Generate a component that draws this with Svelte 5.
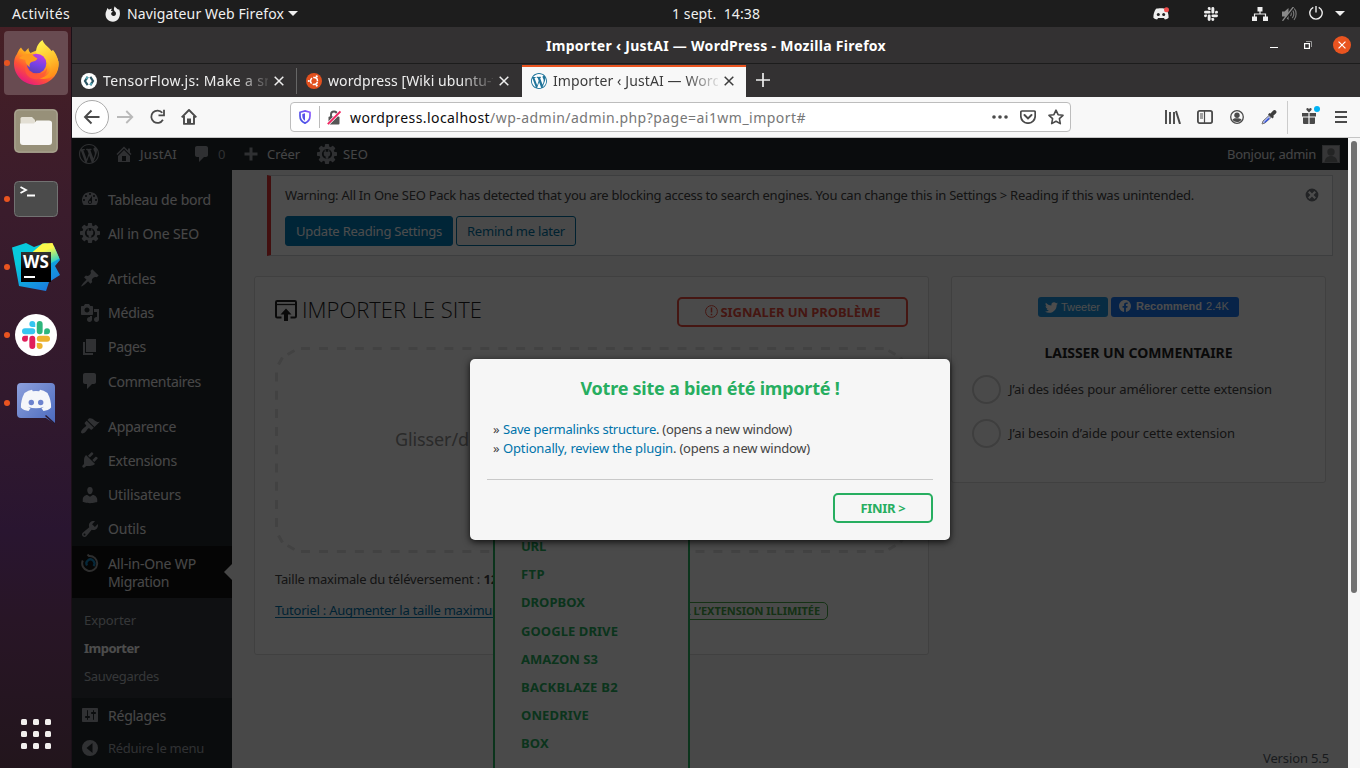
<script>
  // Stretches or tightens a label so that it takes exactly the given width.
  function fit(node, width) {
    if (!width) return;
    const natural = node.getBoundingClientRect().width;
    node.style.letterSpacing = (width - natural) / node.textContent.length + 'px';
  }

  const icons = {
    dashboard: 'M3.76 16h12.48c1.1-1.37 1.76-3.11 1.76-5 0-4.42-3.58-8-8-8s-8 3.58-8 8c0 1.89.66 3.63 1.76 5zM10 4c.55 0 1 .45 1 1s-.45 1-1 1-1-.45-1-1 .45-1 1-1zM6 6c.55 0 1 .45 1 1s-.45 1-1 1-1-.45-1-1 .45-1 1-1zm8 0c.55 0 1 .45 1 1s-.45 1-1 1-1-.45-1-1 .45-1 1-1zm-5.37 5.55L12 7v6c0 1.1-.9 2-2 2s-2-.9-2-2c0-.57.24-1.08.63-1.45zM4 10c.55 0 1 .45 1 1s-.45 1-1 1-1-.45-1-1 .45-1 1-1zm12 0c.55 0 1 .45 1 1s-.45 1-1 1-1-.45-1-1 .45-1 1-1zm-5 3c0-.55-.45-1-1-1s-1 .45-1 1 .45 1 1 1 1-.45 1-1z',
    post: 'M10.44 3.02l1.82-1.82 6.36 6.35-1.83 1.82c-1.05-.68-2.48-.57-3.41.36l-.75.75c-.92.93-1.04 2.35-.35 3.41l-1.83 1.82-2.41-2.41-2.8 2.79c-.42.42-3.38 2.71-3.8 2.29s1.86-3.39 2.28-3.81l2.79-2.79L4.1 9.36l1.83-1.82c1.05.69 2.48.57 3.4-.36l.75-.75c.93-.92 1.05-2.35.36-3.41z',
    media: 'M13 11V4c0-.55-.45-1-1-1h-1.67L9 1H5L3.67 3H2c-.55 0-1 .45-1 1v7c0 .55.45 1 1 1h10c.55 0 1-.45 1-1zM7 4.5c1.38 0 2.5 1.12 2.5 2.5S8.38 9.5 7 9.5 4.5 8.38 4.5 7 5.62 4.5 7 4.5zM14 6h5v10.5c0 1.38-1.12 2.5-2.5 2.5S14 17.88 14 16.5s1.12-2.5 2.5-2.5c.17 0 .34.02.5.05V9h-3V6zm-4 8.05V13h2v3.5c0 1.38-1.12 2.5-2.5 2.5S7 17.88 7 16.5 8.12 14 9.5 14c.17 0 .34.02.5.05z',
    page: 'M6 15V2h10v13H6zm-1 1h8v2H3V5h2v11z',
    comment: 'M5 2h9c1.1 0 2 .9 2 2v7c0 1.1-.9 2-2 2h-2l-5 5v-5H5c-1.1 0-2-.9-2-2V4c0-1.1.9-2 2-2z',
    appearance: 'M14.48 11.06L7.41 3.99l1.5-1.5c.5-.56 2.3-.47 3.51.32 1.21.8 1.43 1.28 2.91 2.1 1.18.64 2.45 1.26 4.45.85zm-.71.71L6.7 4.7 4.93 6.47c-.39.39-.39 1.02 0 1.41l1.06 1.06c.39.39.39 1.03 0 1.42-.6.6-1.43 1.11-2.21 1.69-.35.26-.7.53-1.01.84C1.43 14.23.4 16.08 1.4 17.07c.99 1 2.84-.03 4.18-1.36.31-.31.58-.66.85-1.02.57-.78 1.08-1.61 1.69-2.21.39-.39 1.02-.39 1.41 0l1.06 1.06c.39.39 1.02.39 1.41 0z',
    plugins: 'M13.11 4.36L9.87 7.6 8 5.73l3.24-3.24c.35-.34 1.05-.2 1.56.32.52.51.66 1.21.31 1.55zm-8 1.77l.91-1.12 9.01 9.01-1.19.84c-.71.71-2.63 1.16-3.82 1.16H6.14L4.9 17.26c-.59.59-1.54.59-2.12 0-.59-.58-.59-1.53 0-2.12l1.24-1.24v-3.88c0-1.13.4-3.19 1.09-3.89zm7.26 3.97l3.24-3.24c.34-.35 1.04-.21 1.55.31.52.51.66 1.21.31 1.55l-3.24 3.25z',
    users: 'M10 9.25c-2.27 0-2.73-3.44-2.73-3.44C7 4.02 7.82 2 9.97 2c2.16 0 2.98 2.02 2.71 3.81 0 0-.41 3.44-2.68 3.44zm0 2.57L12.72 10c2.39 0 4.52 2.33 4.52 4.53v2.49s-3.65 1.13-7.24 1.13c-3.65 0-7.24-1.13-7.24-1.13v-2.49c0-2.25 1.94-4.48 4.47-4.48z',
    tools: 'M16.68 9.77c-1.34 1.34-3.3 1.67-4.95.99l-5.41 6.52c-.99.99-2.59.99-3.58 0s-.99-2.59 0-3.57l6.52-5.42c-.68-1.65-.35-3.61.99-4.95 1.28-1.28 3.12-1.62 4.72-1.06l-2.89 2.89 2.82 2.82 2.86-2.87c.53 1.58.18 3.39-1.08 4.65zM3.81 16.21c.4.39 1.04.39 1.43 0 .4-.4.4-1.04 0-1.43-.39-.4-1.03-.4-1.43 0-.39.39-.39 1.03 0 1.43z',
    settings: 'M18 16V4c0-.55-.45-1-1-1H3c-.55 0-1 .45-1 1v12c0 .55.45 1 1 1h14c.55 0 1-.45 1-1zM8 11h1c.55 0 1 .45 1 1s-.45 1-1 1H8v1.5c0 .28-.22.5-.5.5s-.5-.22-.5-.5V13H6c-.55 0-1-.45-1-1s.45-1 1-1h1V5.5c0-.28.22-.5.5-.5s.5.22.5.5V11zm5-2h-1c-.55 0-1-.45-1-1s.45-1 1-1h1V5.5c0-.28.22-.5.5-.5s.5.22.5.5V7h1c.55 0 1 .45 1 1s-.45 1-1 1h-1v5.5c0 .28-.22.5-.5.5s-.5-.22-.5-.5V9z',
    home: 'M16 8.5l1.53 1.53-1.06 1.06L10 4.6l-6.47 6.49-1.06-1.06L10 2.5l4 4v-2h2v4zm-6-2.46l6 5.99V18H4v-5.97zM12 17v-5H8v5h4z',
    wordpress: 'M20 10c0-5.51-4.49-10-10-10C4.48 0 0 4.49 0 10c0 5.52 4.48 10 10 10 5.51 0 10-4.48 10-10zM7.78 15.37L4.37 6.22c.55-.02 1.17-.08 1.17-.08.5-.06.44-1.13-.06-1.11 0 0-1.45.11-2.37.11-.18 0-.37 0-.58-.01C4.12 2.69 6.87 1.11 10 1.11c2.33 0 4.45.87 6.05 2.34-.68-.11-1.65.39-1.65 1.58 0 .74.45 1.36.9 2.1.35.61.55 1.36.55 2.46 0 1.49-1.4 5-1.4 5l-3.03-8.37c.54-.02.82-.17.82-.17.5-.05.44-1.25-.06-1.22 0 0-1.44.12-2.38.12-.87 0-2.33-.12-2.33-.12-.5-.03-.56 1.2-.06 1.22l.92.08 1.26 3.41zM17.41 10c.24-.64.74-1.87.43-4.25.7 1.29 1.05 2.71 1.05 4.25 0 3.29-1.73 6.24-4.4 7.78.97-2.59 1.94-5.2 2.92-7.78zM6.1 18.09C3.12 16.65 1.11 13.53 1.11 10c0-1.3.23-2.48.72-3.59C3.25 10.3 4.67 14.2 6.1 18.09zm4.03-6.63l2.58 6.98c-.86.29-1.76.45-2.71.45-.79 0-1.57-.11-2.29-.33.81-2.38 1.62-4.74 2.42-7.1z',
    plus: 'M8.5 3.5h3v5h5v3h-5v5h-3v-5h-5v-3h5z',
    collapse: 'M10 2a8 8 0 1 0 0 16 8 8 0 0 0 0-16zM12.500 5v10L6.500 10z',
    dismiss: 'M10 2a8 8 0 1 0 0 16 8 8 0 0 0 0-16zm5 11-2 2-3-3-3 3-2-2 3-3-3-3 2-2 3 3 3-3 2 2-3 3z'
  };

  const slack = [
    ['#e01e5a', 'M5.042 15.165a2.528 2.528 0 0 1-2.52 2.523A2.528 2.528 0 0 1 0 15.165a2.527 2.527 0 0 1 2.522-2.52h2.52v2.52zM6.313 15.165a2.527 2.527 0 0 1 2.521-2.52 2.527 2.527 0 0 1 2.521 2.52v6.313A2.528 2.528 0 0 1 8.834 24a2.528 2.528 0 0 1-2.521-2.522v-6.313z'],
    ['#36c5f0', 'M8.834 5.042a2.528 2.528 0 0 1-2.521-2.52A2.528 2.528 0 0 1 8.834 0a2.528 2.528 0 0 1 2.521 2.522v2.52H8.834zM8.834 6.313a2.528 2.528 0 0 1 2.521 2.521 2.528 2.528 0 0 1-2.521 2.521H2.522A2.528 2.528 0 0 1 0 8.834a2.528 2.528 0 0 1 2.522-2.521h6.312z'],
    ['#2eb67d', 'M18.956 8.834a2.528 2.528 0 0 1 2.522-2.521A2.528 2.528 0 0 1 24 8.834a2.528 2.528 0 0 1-2.522 2.521h-2.522V8.834zM17.688 8.834a2.528 2.528 0 0 1-2.523 2.521 2.527 2.527 0 0 1-2.52-2.521V2.522A2.527 2.527 0 0 1 15.165 0a2.528 2.528 0 0 1 2.523 2.522v6.312z'],
    ['#ecb22e', 'M15.165 18.956a2.528 2.528 0 0 1 2.523 2.522A2.528 2.528 0 0 1 15.165 24a2.527 2.527 0 0 1-2.52-2.522v-2.522h2.52zM15.165 17.688a2.527 2.527 0 0 1-2.52-2.523 2.526 2.526 0 0 1 2.52-2.52h6.313A2.527 2.527 0 0 1 24 15.165a2.528 2.528 0 0 1-2.522 2.523h-6.313z']
  ];

  const menuGroups = [
    [['dashboard', 'Tableau de bord', 103], ['gear', 'All in One SEO', 91]],
    [['post', 'Articles', 48], ['media', 'Médias', 46], ['page', 'Pages', 38], ['comment', 'Commentaires', 93]],
    [['appearance', 'Apparence', 68], ['plugins', 'Extensions', 69], ['users', 'Utilisateurs', 73], ['tools', 'Outils', 38]]
  ];

  const sources = [
    ['URL', 25], ['FTP', 24], ['DROPBOX', 64], ['GOOGLE DRIVE', 97],
    ['AMAZON S3', 77], ['BACKBLAZE B2', 97], ['ONEDRIVE', 68], ['BOX', 28]
  ];

  const teeth = [0, 45, 90, 135, 180, 225, 270, 315];
</script>

{#snippet t(text, width)}<span class="t" use:fit={width}>{text}</span>{/snippet}

{#snippet icon(name, size = 20)}
  {#if name === 'gear'}
    <svg width={size} height={size} viewBox="0 0 20 20" fill="currentColor">
      {#each teeth as a}<rect x="7.9" y="0" width="4.2" height="4" rx=".8" transform="rotate({a} 10 10)" />{/each}
      <circle cx="10" cy="10" r="6.4" fill="none" stroke="currentColor" stroke-width="2.6" />
      <path d="M7.7 5.6h1v2.2h2.6V5.6h1v2.2h.9v2.5c0 1.2-.8 2-1.9 2.3v2.2H8.700v-2.200c-1.100-.3-1.900-1.100-1.900-2.300V7.800h.9z" />
    </svg>
  {:else}
    <svg width={size} height={size} viewBox="0 0 20 20" fill="currentColor" fill-rule="evenodd"><path d={icons[name]} /></svg>
  {/if}
{/snippet}

{#snippet cross(size = 10)}
  <svg width={size} height={size} viewBox="0 0 10 10" fill="none" stroke="currentColor" stroke-width="1.5"><path d="M.7.7l8.600 8.600M9.300.7.7 9.300" /></svg>
{/snippet}

<div class="desktop">
  <header class="topbar">
    <div class="activities">{@render t('Activités', 58)}</div>
    <div class="appmenu">
      <svg width="16" height="16" viewBox="0 0 16 16" fill="#eee"><path fill-rule="evenodd" d="M2.500 2 4 3.800C5 3 6 2.700 7 2.900 6.300 3.400 5.800 4 6 4.700c.6.5 1.400.2 1.800.9-.2.600-1.200.7-1.500 1.400-.5 1.700.8 3.100 2.400 3 2.400-.2 2.900-2.800 1.500-4.200C8.800 4.600 8.300 2.500 9.800.2c.5 1.500 2.400 2.300 3.600 3.500l.6-.7c2.600 5.800-.2 12.700-6 12.700C1.200 15.700-.8 9 1.300 5z" /></svg>
      {@render t('Navigateur Web Firefox', 157)}
      <i class="caret"></i>
    </div>
    <div class="clock">{@render t('1 sept.  14:38', 88)}</div>
    <div class="tray">
      <svg class="tr-discord" width="16" height="14" viewBox="0 0 16 14"><path fill="#eee" d="M3 1.800c2-.8 8-.8 10 0 1.800 2.500 2.700 5.500 2.600 9-1.200 1-2.300 1.500-3.700 1.700l-1-1.500H5.100l-1 1.500C2.700 12.300 1.600 11.800.4 10.800.3 7.300 1.200 4.300 3 1.800z" /><circle cx="5.300" cy="7.600" r="1.500" fill="#222" /><circle cx="10.700" cy="7.600" r="1.500" fill="#222" /><circle cx="13.500" cy="2.700" r="2.500" fill="#ef4b4b" /></svg>
      <svg class="tr-slack" width="14" height="14" viewBox="0 0 24 24" fill="#eee">{#each slack as s}<path d={s[1]} />{/each}</svg>
      <svg class="tr-net" width="16" height="14" viewBox="0 0 16 14" fill="#eee"><path d="M5.500 0h5v4.500h-5zM0 9.500h5V14H0zM11 9.500h5V14h-5z" /><path d="M8 4v3M2.500 10V7h11v3" fill="none" stroke="#eee" stroke-width="1.200" /></svg>
      <svg class="tr-vol" width="16" height="14" viewBox="0 0 16 14" fill="#8a8a8a"><path d="M1 4.500h2.500L7.500 1v12l-4-3.500H1z" /><path d="M9.500 5c1 1 1 3 0 4M11.300 3c2 2 2 6 0 8M13 1.200c2.800 3 2.800 8.500 0 11.600" fill="none" stroke="#777" stroke-width="1.200" /><path d="M2.500 14.500 13.500 0" stroke="#1d1d1d" stroke-width="1.500" /><path d="M1.500 13.800 12.500-.2" stroke="#8a8a8a" stroke-width="1.300" /></svg>
      <svg class="tr-power" width="14" height="14" viewBox="0 0 14 14" fill="none" stroke="#eee" stroke-width="1.400"><path d="M4.300 1.300a6.200 6.200 0 1 0 5.400 0M7 0v6.500" /></svg>
      <i class="caret"></i>
    </div>
  </header>

  <div class="body">
    <nav class="dock">
      <div class="slot on focused"><svg width="48" height="48" viewBox="0 0 48 48">
        <defs>
          <linearGradient id="fx" x1=".8" y1=".1" x2=".2" y2=".95"><stop offset="0" stop-color="#fff44f" /><stop offset=".35" stop-color="#ffa61e" /><stop offset=".65" stop-color="#ff5136" /><stop offset="1" stop-color="#e31587" /></linearGradient>
          <linearGradient id="fy" x1=".3" y1="0" x2=".6" y2="1"><stop offset="0" stop-color="#fff44f" /><stop offset=".55" stop-color="#ffc02c" /><stop offset="1" stop-color="#ff8a16" /></linearGradient>
          <linearGradient id="fz" x1=".6" y1="0" x2=".3" y2="1"><stop offset="0" stop-color="#c43de0" /><stop offset=".55" stop-color="#7542e5" /><stop offset="1" stop-color="#5b3fb0" /></linearGradient>
        </defs>
        <path fill="url(#fx)" d="M9 8.500c1 2 2.500 3.300 4 4.300L16.500 9c0 2.500.8 3.800 2 5L30 9c4 0 14 3 16.500 13.500C48 36 37 46 25 46 11 46 2 36 2 24.500c0-4 1-7 3-9.500.5-1 1.500-4.500 4-6.500z" />
        <path fill="url(#fy)" d="M30.500 1c1.500 5 7 7.500 9 11l1.500-1c5 6 7 14 4 21-4 8-13 9-18 7 8 0 14-7 11-15-2-5-9-6-13.500-8.500C23 10 26 4 30.500 1z" />
        <circle cx="24.500" cy="24.500" r="9.800" fill="url(#fz)" />
        <path fill="#ff9a1f" d="M7 19c5-4 9-5 13-4 2 3 4 3.500 5.500 4.500-1 2.500-4 3-6 3.500-2 1-2.500 3-1.500 5-3-1-5-5-4.500-7-2-.5-4.500-1-6.500-2z" />
        <path fill="#ff5a35" opacity=".75" d="M14 24c0 9 8 13 14 11 4-1 6-4 7-6 0 8-7 12-13 11-7-1-11-8-8-16z" />
      </svg></div>
      <div class="slot"><svg width="46" height="46" viewBox="0 0 46 46"><rect x="1" y="1" width="44" height="44" rx="5" fill="#938b78" /><rect x="2" y="2" width="42" height="42" rx="4" fill="#979079" stroke="#aaa492" /><path d="M7.500 12V10.500q0-1.500 1.500-1.500h10l3 3v4H7.500z" fill="#e3dfd4" /><path d="M7 15.500h14l2.500-3H36q3 0 3 2.500v19q0 3-3 3H10q-3 0-3-3z" fill="#f8f7f5" /></svg></div>
      <div class="slot on"><svg width="46" height="38" viewBox="0 0 46 38"><rect x="1.500" y="1.500" width="43" height="35" rx="4" fill="#4b4b4b" stroke="#727272" /><path d="M7.500 7l5.500 3-5.500 3M14 15.500h8" fill="none" stroke="#fff" stroke-width="1.800" /></svg></div>
      <div class="slot on ws">
        <svg width="48" height="48" viewBox="0 0 48 48"><defs><linearGradient id="wa" x1="0" y1="0" x2=".7" y2="1"><stop offset=".35" stop-color="#07c9dc" /><stop offset="1" stop-color="#1b7be0" /></linearGradient><linearGradient id="wk" x1="0" y1="0" x2="0" y2="1"><stop offset="0" stop-color="#333" /><stop offset=".6" stop-color="#000" /></linearGradient><linearGradient id="wy" x1=".4" y1="0" x2=".9" y2="1"><stop offset=".3" stop-color="#fcf84a" /><stop offset="1" stop-color="#07c9dc" /></linearGradient></defs><path fill="url(#wa)" d="M0 4.500 14 0l8 4 11-4 9 3 6 14-5 6 5 9-11 7-3 9-27-5z" /><path fill="url(#wy)" d="m20 9.500 10.500-9 10-.500 7 15.500-9 5V9.500z" /><rect x="9" y="9" width="30" height="30" fill="url(#wk)" /><path fill="#fff" d="M12 33h11v2H12z" /></svg>
        <b>{@render t('WS', 26)}</b>
      </div>
      <div class="slot on"><svg width="42" height="42" viewBox="0 0 42 42"><circle cx="21" cy="21" r="21" fill="#fff" /><g transform="translate(7 7) scale(1.167)">{#each slack as s}<path fill={s[0]} d={s[1]} />{/each}</g></svg></div>
      <div class="slot on"><svg width="38" height="42" viewBox="0 0 38 42"><defs><linearGradient id="dc" x1="0" y1="0" x2="1" y2="1"><stop offset="0" stop-color="#8da0dc" /><stop offset="1" stop-color="#4a69bd" /></linearGradient></defs><path fill="url(#dc)" d="M4 1h30q4 0 4 4v37l-9-6H4q-4 0-4-4V5q0-4 4-4z" /><path fill="#f5f6fa" d="M7.500 11q4-3 7.500-3.300l.8 1.500q3.200-.5 6.400 0l.8-1.500q3.500.3 7.500 3.300 3.800 7 3.600 14.500-3 3.200-7.600 3.400l-2-2.600 2.500-1.600q-8 3-16 0l2.500 1.600-2 2.600q-4.600-.2-7.600-3.400Q3.700 18 7.500 11z" /><circle cx="14.300" cy="20.500" r="2.700" fill="#6c82ce" /><circle cx="23.700" cy="20.500" r="2.700" fill="#6c82ce" /><path d="M28.500 33.500 38 42" stroke="#29172b" stroke-width="1.500" /></svg></div>
      <div class="apps">{#each teeth as a}<i></i>{/each}<i></i></div>
    </nav>

    <section class="window">
      <div class="titlebar">
        <b>{@render t('Importer ‹ JustAI — WordPress - Mozilla Firefox', 340)}</b>
        <div class="winctl">
          <i class="min"></i>
          <svg width="8" height="8" viewBox="0 0 8 8" fill="none"><path d="M2 .5h5.500V6" stroke="#999" /><rect x=".6" y="2.600" width="4.800" height="4.800" stroke="#fff" stroke-width="1.200" /></svg>
          <i class="close">{@render cross(8)}</i>
        </div>
      </div>

      <div class="tabs">
        <div class="tab first">
          <svg width="16" height="16" viewBox="0 0 16 16"><circle cx="8" cy="8" r="8" fill="#fff" /><path d="M6.700 3.800 4 8l2.700 4.200M9.300 3.800 12 8l-2.700 4.200" fill="none" stroke="#2c5563" stroke-width="2.200" /><path d="M6.700 3.800 5.300 6M9.300 12.200 10.700 10" stroke="#55a6b5" stroke-width="2.200" /></svg>
          <div class="label">{@render t('TensorFlow.js: Make a smile', 191)}</div>{@render cross()}
        </div>
        <div class="tab second">
          <svg width="16" height="16" viewBox="0 0 16 16"><circle cx="8" cy="8" r="8" fill="#e2501e" /><circle cx="8" cy="8" r="3.500" fill="none" stroke="#fff" stroke-width="1.500" stroke-dasharray="6.100 1.230" stroke-dashoffset="-.6" /><circle cx="2.800" cy="8" r="1.100" fill="#fff" /><circle cx="10.700" cy="3.400" r="1.100" fill="#fff" /><circle cx="10.700" cy="12.600" r="1.100" fill="#fff" /></svg>
          <div class="label">{@render t('wordpress [Wiki ubuntu-fr]', 179)}</div>{@render cross()}
        </div>
        <div class="tab active">
          <span class="wpfav">{@render icon('wordpress', 16)}</span>
          <div class="label">{@render t('Importer ‹ JustAI — WordPress', 204)}</div>{@render cross()}
        </div>
        <svg class="newtab" width="14" height="14" viewBox="0 0 14 14" stroke="#eee" stroke-width="1.700"><path d="M7 0v14M0 7h14" /></svg>
      </div>

      <div class="navbar">
        <div class="back"><svg width="18" height="16" viewBox="0 0 18 16" fill="none" stroke="#4a4a4a" stroke-width="1.900"><path d="M16.500 8H2M8.500 1.500 2 8l6.500 6.500" /></svg></div>
        <svg class="fwd" width="17" height="14" viewBox="0 0 17 14" fill="none" stroke="#b9b9b9" stroke-width="1.800"><path d="M0 7h15M9.300 1l6 6-6 6" /></svg>
        <svg class="reload" width="16" height="16" viewBox="0 0 16 16" fill="none" stroke="#4a4a4a" stroke-width="1.800"><path d="M13.300 3.800a6.200 6.200 0 1 0 .6 7" /><path d="M15 .8v5.500H9.500" /></svg>
        <svg class="homeic" width="16" height="16" viewBox="0 0 16 16" fill="none" stroke="#4a4a4a" stroke-width="1.900"><path d="M.7 8.300 8 1l7.300 7.300M3 7v7.900h10V7" stroke-linejoin="round" /><path d="M6 15V9.500h4V15z" fill="#4a4a4a" stroke="none" /></svg>
        <div class="urlbar">
          <svg class="shield" width="12" height="14" viewBox="0 0 12 14"><defs><linearGradient id="sh" x1="1" y1="0" x2="0" y2="1"><stop offset="0" stop-color="#9059ff" /><stop offset="1" stop-color="#3a4fe0" /></linearGradient></defs><path d="M6 .9 11 2.300V6c0 3.500-2 5.800-5 7.100C3 11.800 1 9.500 1 6V2.300z" fill="none" stroke="url(#sh)" stroke-width="1.700" /><path d="M6 3.200v7.600C4.300 9.700 3.300 8.200 3.300 6V4z" fill="#5b50e8" /></svg>
          <i class="div"></i>
          <svg class="lock" width="14" height="15" viewBox="0 0 14 15"><path d="M4 7V4.500a3 3 0 0 1 6 0V7" fill="none" stroke="#555" stroke-width="1.900" /><rect x="1.500" y="6.500" width="11" height="8" rx="1" fill="#555" /><path d="M.8 14.200 13.200 1.800" stroke="#fff" stroke-width="3.200" /><path d="M.8 14.200 13.500 1.500" stroke="#f0245f" stroke-width="1.900" /></svg>
          <span class="host">{@render t('wordpress.localhost', 140)}</span><span class="path">{@render t('/wp-admin/admin.php?page=ai1wm_import#', 316)}</span>
          <div class="urlicons">
            <svg width="16" height="4" viewBox="0 0 16 4" fill="#4a4a4a"><circle cx="2" cy="2" r="1.800" /><circle cx="8" cy="2" r="1.800" /><circle cx="14" cy="2" r="1.800" /></svg>
            <svg width="16" height="14" viewBox="0 0 16 14" fill="none" stroke="#4a4a4a" stroke-width="1.700"><path d="M2 1h12q1.200 0 1.200 1.200V6a7.200 7.200 0 0 1-14.400 0V2.200Q.8 1 2 1z" /><path d="M4.500 5 8 8.400 11.500 5" stroke-width="2" stroke-linecap="round" /></svg>
            <svg width="16" height="16" viewBox="0 0 16 16" fill="none" stroke="#4a4a4a" stroke-width="1.600" stroke-linejoin="round"><path d="m8 1.200 2.100 4.500 4.900.6-3.600 3.400.9 4.900L8 12.200l-4.300 2.400.9-4.900L1 6.300l4.900-.6z" /></svg>
          </div>
        </div>
        <div class="tools">
          <svg width="16" height="14" viewBox="0 0 16 14" fill="none" stroke="#4a4a4a" stroke-width="2"><path d="M1 0v14M5 2v12M9 2v12" stroke-width="1.900" /><path d="m11 1 4 13" /></svg>
          <svg width="16" height="14" viewBox="0 0 16 14" fill="none" stroke="#4a4a4a" stroke-width="1.800"><rect x=".9" y=".9" width="14.200" height="12.200" rx="1.800" /><path d="M7.500 1v12" stroke-width="1.200" /><path d="M3 4h3M3 6h3M3 8h3" stroke-width="1" /></svg>
          <svg width="14" height="14" viewBox="0 0 14 14"><circle cx="7" cy="7" r="6.300" fill="none" stroke="#4a4a4a" stroke-width="1.300" /><circle cx="7" cy="5.200" r="2.700" fill="#4a4a4a" /><path d="M2.500 9.500C4 7.800 5.500 8.200 7 8.200s3 0 4.500 1.300C10.500 11.500 8.800 12 7 12s-3.500-.7-4.500-2.500z" fill="#4a4a4a" /></svg>
          <svg width="16" height="15" viewBox="0 0 16 15"><path d="M1 14l1-3 6-5.500L10 7.500l-6 5.500z" fill="#aab5ee" stroke="#777" stroke-width="1" /><path d="M3 12.500 7.500 8l1 1-4 3.500z" fill="#2c4de0" /><path d="M7 4.500 8.500 3l1 .5L12 .8c1-1 2-.8 2.800-.2.900.9 1 1.900 0 2.900l-2.500 2.300.5 1.200L11.500 8.500z" fill="#3d3d3d" /></svg>
          <i class="div"></i>
          <svg class="gift" width="20" height="18" viewBox="0 0 20 18" fill="#4a4a4a"><path d="M1 7h6.400v3.500H1zM8.600 7H15v3.500H8.600zM2 11.500h5.400V18H3q-1 0-1-1zM8.600 11.500H14V17q0 1-1 1H8.600zM8 6.500 5.500 4q-.8-1.600.8-2Q7.500 2 8 3.200 8.500 2 9.700 2q1.600.4.8 2z" /><circle cx="16" cy="3" r="3" fill="#00b3f4" /></svg>
          <svg class="burger" width="12" height="12" viewBox="0 0 12 12" fill="none" stroke="#4a4a4a" stroke-width="2"><path d="M0 1h12M0 6h12M0 11h12" /></svg>
        </div>
      </div>

      <div class="viewport">
        <div class="page">
          <div class="adminbar">
            <span class="ab">{@render icon('wordpress', 20)}</span>
            <span class="ab ab-home">{@render icon('home', 20)}</span>{@render t('JustAI', 37)}
            <span class="ab ab-com">{@render icon('comment', 20)}</span><span class="ab">{@render t('0', 8)}</span>
            <span class="ab ab-plus">{@render icon('plus', 20)}</span>{@render t('Créer', 33)}
            <span class="ab ab-gear">{@render icon('gear', 20)}</span>{@render t('SEO', 25)}
            <div class="me">{@render t('Bonjour, admin', 89)}<svg width="18" height="18" viewBox="0 0 18 18"><rect width="18" height="18" fill="#8c8f94" /><rect x="1" y="1" width="16" height="16" fill="#b4b5b8" /><circle cx="9" cy="7" r="3.700" fill="#77787b" /><path d="M2.500 17c.5-4 3-6 6.500-6s6 2 6.500 6z" fill="#77787b" /></svg></div>
          </div>
          <div class="columns">
            <aside class="sidebar">
              {#each menuGroups as group}
                <div class="group">
                  {#each group as [ic, label, w]}
                    <div class="item"><span class="ic">{@render icon(ic)}</span>{@render t(label, w)}</div>
                  {/each}
                </div>
              {/each}
              <div class="item current">
                <span class="ic"><svg width="18" height="18" viewBox="0 0 18 18" fill="none" stroke-width="2"><path d="M1.800 6.500A7.500 7.500 0 1 0 8 2L6.500.5" stroke="#9a9a9a" /><path d="M12.500 12a4 4 0 1 0-6.500-.5" stroke="#1286c4" stroke-width="2.200" /></svg></span>
                <div class="two">{@render t('All-in-One WP', 88)}{@render t('Migration', 61)}</div>
              </div>
              <div class="submenu">
                <div>{@render t('Exporter', 52)}</div>
                <div class="sel">{@render t('Importer', 55)}</div>
                <div>{@render t('Sauvegardes', 75)}</div>
              </div>
              <div class="item settings"><span class="ic">{@render icon('settings')}</span>{@render t('Réglages', 58)}</div>
              <div class="item fold"><span class="ic">{@render icon('collapse')}</span>{@render t('Réduire le menu', 96)}</div>
            </aside>

            <main>
              <div class="notice">
                <div class="notice-text">{@render t('Warning: All In One SEO Pack has detected that you are blocking access to search engines. You can change this in Settings > Reading if this was unintended.', 909)}<span class="dismiss">{@render icon('dismiss', 16)}</span></div>
                <div class="notice-actions"><span class="btn primary">{@render t('Update Reading Settings', 146)}</span><span class="btn">{@render t('Remind me later', 98)}</span></div>
              </div>
              <div class="cards">
                <div class="card import">
                  <div class="card-head">
                    <svg width="22" height="21" viewBox="0 0 22 21"><path d="M6.500 17.500H2.200q-1.200 0-1.200-1.200V2.200Q1 1 2.200 1h17.600Q21 1 21 2.200v14.100q0 1.200-1.200 1.200H15.500" fill="none" stroke="#222" stroke-width="2" /><path d="M1 4.500h20" stroke="#222" stroke-width="1.300" /><path d="m11 8.500 5.500 6H13V21H9v-6.500H5.500z" fill="#222" /></svg>
                    <h1>{@render t('IMPORTER LE SITE', 180)}</h1>
                    <div class="report"><svg width="13" height="13" viewBox="0 0 13 13" fill="none" stroke="#e74c3c" stroke-width="1"><circle cx="6.500" cy="6.500" r="5.900" /><path d="M6.500 2.500v5M6.500 8.800v1.500" stroke-width="1.500" /></svg>{@render t('SIGNALER UN PROBLÈME', 160)}</div>
                  </div>
                  <div class="drop">
                    <svg width="633" height="206" viewBox="0 0 633 206" fill="none" stroke="#dcdcdc" stroke-width="3">
                      <path d="M26 1.500h583M26 204.500h583" stroke-dasharray="9 8.930" />
                      <path d="M1.500 25.500v156M631.500 25.500v156" stroke-dasharray="9 9.200" />
                      {#each ['', 'translate(633 0) scale(-1 1)', 'translate(0 206) scale(1 -1)', 'translate(633 206) scale(-1 -1)'] as tr}
                        <path d="M12.500 7.500 19.500 3.500M3.500 17.500 7.500 10.500" transform={tr} />
                      {/each}
                    </svg>
                    <span>{@render t('Glisser/dé', 84)}</span>
                  </div>
                  <p class="size">{@render t('Taille maximale du téléversement :', 205)} <b>12</b></p>
                  <div class="tuto"><span class="lnk">{@render t('Tutoriel : Augmenter la taille maximum', 229)}</span><span class="pill">{@render t('OBTENIR L’EXTENSION ILLIMITÉE', 178)}</span></div>
                </div>

                <div class="card feedback">
                  <div class="social">
                    <span class="tw"><svg width="13" height="13" viewBox="0 0 24 24" fill="#fff"><path d="M23.953 4.570a10 10 0 01-2.825.775 4.958 4.958 0 002.163-2.723c-.951.555-2.005.959-3.127 1.184a4.920 4.920 0 00-8.384 4.482C7.690 8.095 4.067 6.130 1.640 3.162a4.822 4.822 0 00-.666 2.475c0 1.710.870 3.213 2.188 4.096a4.904 4.904 0 01-2.228-.616v.060a4.923 4.923 0 003.946 4.827 4.996 4.996 0 01-2.212.085 4.936 4.936 0 004.604 3.417 9.867 9.867 0 01-6.102 2.105c-.390 0-.779-.023-1.170-.067a13.995 13.995 0 007.557 2.209c9.053 0 13.998-7.496 13.998-13.985 0-.210 0-.420-.015-.630A9.935 9.935 0 0024 4.590z" /></svg>{@render t('Tweeter', 39)}</span>
                    <span class="fb"><svg width="12" height="12" viewBox="0 0 24 24" fill="#fff"><path d="M24 12.073c0-6.627-5.373-12-12-12s-12 5.373-12 12c0 5.990 4.388 10.954 10.125 11.854v-8.385H7.078v-3.470h3.047V9.430c0-3.007 1.792-4.669 4.533-4.669 1.312 0 2.686.235 2.686.235v2.953H15.830c-1.491 0-1.956.925-1.956 1.874v2.250h3.328l-.532 3.470h-2.796v8.385C19.612 23.027 24 18.062 24 12.073z" /></svg><b>{@render t('Recommend', 66)}</b>{@render t('2.4K', 23)}</span>
                  </div>
                  <h2>{@render t('LAISSER UN COMMENTAIRE', 188)}</h2>
                  <div class="radio"><i></i>{@render t('J’ai des idées pour améliorer cette extension', 263)}</div>
                  <div class="radio"><i></i>{@render t('J’ai besoin d’aide pour cette extension', 226)}</div>
                </div>
              </div>
              <div class="version">{@render t('Version 5.5', 66)}</div>
              <div class="menu">
                {#each sources as [name, w]}<div>{@render t(name, w)}</div>{/each}
              </div>
            </main>
          </div>
          <div class="shade"></div>
          <div class="modal">
            <h3>{@render t('Votre site a bien été importé !', 259)}</h3>
            <p>» <a href="#top">{@render t('Save permalinks structure', 153)}</a>{@render t('. (opens a new window)', 136)}</p>
            <p>» <a href="#top">{@render t('Optionally, review the plugin', 170)}</a>{@render t('. (opens a new window)', 137)}</p>
            <div class="foot"><span class="done">{@render t('FINIR >', 45)}</span></div>
          </div>
        </div>
        <div class="scroll"><i></i></div>
      </div>
    </section>
  </div>
</div>

<style>
  :global(body) { margin: 0; overflow: hidden; }
  .desktop { width: 1360px; height: 768px; overflow: hidden; display: flex; flex-direction: column; font-family: 'Noto Sans', 'Open Sans', sans-serif; font-size: 13px; }
  .desktop :global(*) { box-sizing: border-box; }
  svg { display: block; flex: none; }
  .t { display: inline-block; white-space: pre; flex: none; }
  .body { flex: 1; display: flex; min-height: 0; }

  .topbar { height: 27px; background: #1d1d1d; color: #f0f0f0; font-size: 14px; display: grid; grid-template-columns: 105px 567px 1fr auto; align-items: center; flex: none; }
  .activities { padding-left: 12px; }
  .appmenu { display: flex; align-items: center; gap: 6px; }
  .appmenu .t { margin-right: -2px; }
  .caret { width: 0; height: 0; border: 5px solid transparent; border-top: 5px solid #eee; border-bottom: 0; }
  .tray { display: flex; align-items: center; padding-right: 15px; }
  .tr-slack { margin-left: 35px; }
  .tr-net { margin-left: 34px; }
  .tr-vol { margin-left: 13px; }
  .tr-power { margin: -1px 12px 0 12px; }

  .dock { width: 72px; flex: none; background: linear-gradient(#461f25, #3a1c2c 25%, #31192d 50%, #291530 68%, #281526 80%, #22151c); display: flex; flex-direction: column; padding-top: 2px; border-right: 1px solid #1b1018; }
  .slot { position: relative; width: 64px; height: 64px; margin: 2px 4px; border-radius: 4px; display: grid; place-items: center; flex: none; }
  .focused { background: #684b51; }
  .on::before { content: ''; position: absolute; left: -.500px; top: 29px; width: 6px; height: 6px; border-radius: 50%; background: #e95420; }
  .ws b { position: absolute; left: 19px; top: 17px; font: bold 17px/20px 'Open Sans', sans-serif; color: #fff; }
  .apps { margin: auto auto 19px 21px; display: grid; grid-template-columns: repeat(3, 6px); gap: 6px; }
  .apps i { width: 6px; height: 6px; border-radius: 1.500px; background: #f2f0ee; }

  .window { flex: 1; min-width: 0; display: flex; flex-direction: column; }
  .titlebar { height: 37px; background: #333132; color: #fff; font-size: 14px; border-bottom: 1px solid #1c1c1c; display: grid; grid-template-columns: 1fr auto; align-items: center; flex: none; padding-left: 474px; }
  .winctl { display: flex; align-items: center; gap: 21px; padding-right: 9px; }
  .min { width: 8px; height: 1px; background: #fff; margin: 4px 5px 0 0; }
  .close { width: 18px; height: 18px; border-radius: 50%; background: #e95420; color: #fff; display: grid; place-items: center; }

  .tabs { height: 33px; background: #333132; color: #eee; font-size: 14px; display: flex; flex: none; }
  .tab { display: flex; align-items: center; gap: 6px; padding-left: 9px; }
  .tab .label { width: 165px; overflow: hidden; -webkit-mask-image: linear-gradient(90deg, #000 80%, transparent 103%); mask-image: linear-gradient(90deg, #000 80%, transparent 103%); }
  .first { width: 225px; border-right: 1px solid; border-image: linear-gradient(transparent 15%, #666 15% 88%, transparent 88%) 1; }
  .second { width: 225px; }
  .active { width: 224px; background: #f8f8f8; color: #3c3c3c; border-top: 2px solid #e95420; margin-top: 1px; padding-bottom: 3px; }
  .wpfav { color: #21759b; background: #fff; border-radius: 50%; }
  .newtab { margin: 9px 0 0 10px; }

  .navbar { height: 41px; background: #f8f8f8; border-bottom: 1px solid #c5c5c5; display: flex; align-items: center; flex: none; }
  .back { width: 34px; height: 34px; border: 1px solid #aaa; border-radius: 50%; background: #fff; display: grid; place-items: center; margin-left: 3px; }
  .fwd { margin-left: 8px; }
  .reload { margin-left: 15px; }
  .homeic { margin-left: 16px; }
  .urlbar { width: 781px; height: 30px; margin-left: 93px; border: 1px solid #bdbdbd; border-radius: 4px; background: #fff; display: flex; align-items: center; font-size: 14px; }
  .shield { margin-left: 8px; }
  .div { width: 1px; height: 22px; background: #bbb; }
  .shield + .div { margin-left: 8px; }
  .lock { margin: 0 9px 0 7px; }
  .host { color: #0c0c0d; }
  .path { color: #777; }
  .urlicons { margin-left: auto; display: flex; align-items: center; gap: 12px; padding-right: 6px; }
  .tools { flex: 1; display: flex; align-items: center; gap: 16px; padding-left: 94px; }
  .tools .div { height: 33px; background: #ccc; margin: 0 -4px 0 -6px; }
  .tools svg:nth-child(3) { margin: 0 1px; }
  .gift { margin: -5px -2px 0 1px; }

  .viewport { flex: 1; display: flex; min-height: 0; }
  .scroll { width: 12px; background: #f6f6f6; padding: 3px 0 0 3px; }
  .scroll i { display: block; width: 6px; height: 452px; border-radius: 3px; background: #707070; }
  .page { position: relative; flex: 1; display: flex; flex-direction: column; overflow: hidden; background: #f1f1f1; color: #444; }
  .shade { position: absolute; inset: 0; background: rgba(0, 0, 0, .7); }

  .adminbar { height: 32px; background: #23282d; color: #e4e6e8; display: flex; align-items: center; padding-left: 7px; flex: none; }
  .ab { color: #9da2a7; }
  .ab-home { margin: 0 6px 0 15px; }
  .ab-com { margin: 0 6px 0 15px; }
  .ab-plus { margin: 0 6px 0 15px; }
  .ab-gear { margin: 0 6px 0 17px; }
  .me { margin-left: auto; padding-right: 8px; display: flex; align-items: center; gap: 6px; }

  .columns { flex: 1; min-height: 0; display: flex; }
  .sidebar { width: 160px; flex: none; background: #23282d; color: #eee; padding-top: 12px; font-size: 14px; }
  .group { margin-bottom: 11px; }
  .group:nth-child(3) { margin-bottom: 0; }
  .item { height: 34.200px; display: flex; align-items: center; gap: 8px; padding-left: 8px; }
  .ic { width: 20px; display: grid; place-items: center; color: #a0a5aa; }
  .current { position: relative; height: 52px; background: #111; align-items: flex-start; padding-top: 8px; line-height: 18px; }
  .current .two { display: flex; flex-direction: column; align-items: flex-start; margin-top: 1px; }
  .current::after { content: ''; position: absolute; right: 0; top: 18px; border: 8px solid transparent; border-right-color: #f1f1f1; border-left: 0; }
  .submenu { height: 100px; background: #32373c; color: #b4b9be; padding: 8px 0 0 12px; font-size: 13px; line-height: 28px; }
  .submenu .sel { color: #fff; font-weight: 700; }
  .settings { height: 35px; }
  .fold { height: 31px; font-size: 13px; color: #a0a5aa; }

  main { flex: 1; position: relative; display: flex; flex-direction: column; min-width: 0; }
  .notice { height: 81px; margin: 5px 15px 0 35px; background: #fff; border: 1px solid #ccd0d4; border-left: 4px solid #dc3232; padding: 9px 12px 0 14px; flex: none; line-height: 20px; }
  .notice-text { display: flex; align-items: center; height: 20px; }
  .dismiss { margin-left: auto; color: #72777c; }
  .notice-actions { display: flex; gap: 3px; padding-top: 11px; }
  .btn { height: 30px; padding: 0 10px; border: 1px solid #0071a1; border-radius: 3px; background: #f3f5f6; color: #0071a1; line-height: 28px; }
  .primary { background: #007cba; border-color: #007cba; color: #fff; }
  .cards { display: flex; align-items: flex-start; gap: 22px; padding: 20px 0 0 22px; }
  .card { background: #f9f9f9; border: 1px solid #d6d6d6; border-radius: 3px; padding: 20px; flex: none; }
  .import { width: 675px; height: 379px; }
  .feedback { width: 375px; height: 207px; }
  .card-head { height: 30px; display: flex; align-items: center; }
  .card-head > svg { margin-top: -3px; }
  h1 { margin: -6px 0 0 5px; font: 300 22px/28px 'Open Sans', sans-serif; color: #1d1d1d; }
  .report { margin-left: auto; width: 231px; height: 30px; border: 2px solid #e74c3c; border-radius: 5px; color: #e74c3c; font-weight: 700; display: flex; align-items: center; justify-content: center; gap: 3px; }
  .report svg { margin-top: -2px; }
  .drop { height: 206px; margin-top: 20px; position: relative; font-size: 18px; color: #8c8c8c; }
  .drop > span { position: absolute; left: 120px; top: 80px; }
  .size { margin: 16px 0 0; line-height: 20px; }
  .tuto { margin-top: 12px; height: 20px; display: flex; align-items: center; }
  .lnk { color: #0073aa; border-bottom: 1px solid #0073aa; line-height: 14px; margin-top: -1px; }
  .pill { margin-left: 130px; height: 18px; border: 1px solid #46a546; border-radius: 5px; color: #46a546; font: 700 11px/16px 'Noto Sans', sans-serif; padding: 0 7px; }
  .social { display: flex; justify-content: center; gap: 3px; font-family: 'Liberation Sans', sans-serif; font-size: 11px; color: #fff; }
  .tw { width: 70px; height: 20px; border-radius: 3px; background: #1b95e0; display: flex; align-items: center; gap: 3px; padding-left: 7px; }
  .fb { width: 128px; height: 20px; border-radius: 3px; background: #1877f2; display: flex; align-items: center; gap: 4px; padding: 0 0 2px 8px; }
  .fb b { margin-left: 1px; }
  h2 { margin: 26px 0 12px; font-size: 14px; line-height: 20px; text-align: center; color: #222; }
  .radio { display: flex; align-items: center; gap: 8px; height: 29px; margin-bottom: 15px; }
  .radio .t { margin-top: -2px; }
  .radio i { width: 29px; height: 29px; border: 2px solid #d0d0d0; border-radius: 50%; }
  .version { position: absolute; right: 19px; bottom: 0; color: #555d66; line-height: 20px; }
  .menu { position: absolute; left: 261px; top: 300px; width: 197px; height: 298px; background: #f9f9f9; border: solid #27ae60; border-width: 0 2px; padding: 62px 0 0 26px; color: #27ae60; font-weight: 700; line-height: 28.200px; }

  .modal { position: absolute; left: 398px; top: 221px; width: 480px; height: 181px; border-radius: 5px; background: #f6f6f6; box-shadow: 0 2px 7px rgba(0, 0, 0, .8); padding: 17px; color: #444; }
  h3 { margin: 0 0 19px; font-size: 18px; line-height: 25px; text-align: center; color: #27ae60; }
  .modal p { margin: 0; padding-left: 6px; line-height: 19px; white-space: pre; display: flex; }
  .modal a { color: #0073aa; text-decoration: none; }
  .foot { margin-top: 21px; border-top: 1px solid #c9c9c9; padding-top: 13px; display: flex; justify-content: flex-end; }
  .done { width: 100px; height: 30px; border: 2px solid #27ae60; border-radius: 5px; color: #27ae60; font-weight: 700; line-height: 26px; text-align: center; }
</style>
